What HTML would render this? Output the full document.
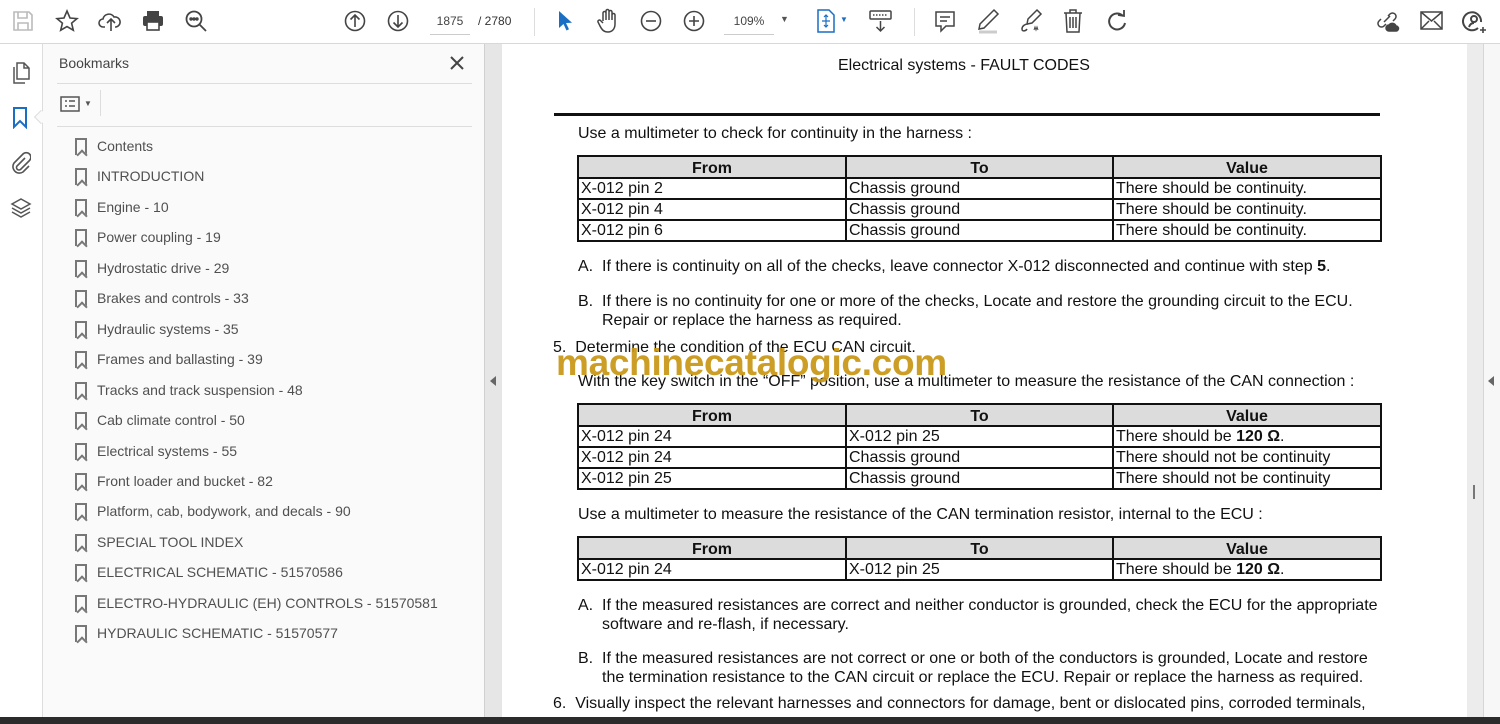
<!DOCTYPE html>
<html><head><meta charset="utf-8"><style>
*{margin:0;padding:0;box-sizing:border-box}
body{width:1500px;height:724px;overflow:hidden;background:#fff;font-family:"Liberation Sans",Arial,sans-serif;position:relative}
.a{position:absolute}
#tb{left:0;top:0;width:1500px;height:44px;background:#fff;border-bottom:1px solid #d8d8d8}
#rail{left:0;top:44px;width:43px;height:674px;background:#fff;border-right:1px solid #ddd}
#bm{left:43px;top:44px;width:441px;height:674px;background:#fafafa}
#split{left:484px;top:44px;width:18px;height:674px;background:#e6e6e6;border-left:1px solid #d0d0d0}
#page{left:502px;top:44px;width:965px;height:674px;background:#fff}
#rg{left:1467px;top:44px;width:16px;height:674px;background:#ececec}
#rr{left:1483px;top:44px;width:17px;height:674px;background:#f7f7f7;border-left:1px solid #d6d6d6}
#bot{left:0;top:717px;width:1500px;height:7px;background:#2b2b2b}
.bk{position:absolute;left:97px;font-size:14px;color:#505050;font-family:"Liberation Sans",sans-serif}
.bi{position:absolute;left:75px;width:12px;height:17px;border:2px solid #777;border-bottom:none}
.bi:after{content:"";position:absolute;left:1px;bottom:-4px;width:6px;height:6px;border-left:2px solid #777;border-top:2px solid #777;transform:rotate(45deg);background:#fafafa}
.t{position:absolute;font-size:16px;color:#111;white-space:nowrap}
table{position:absolute;left:577px;width:803px;border-collapse:collapse;font-size:16px;color:#111;table-layout:fixed}
td,th{border:2px solid #111;height:21px;padding:0 2px;line-height:17px;text-align:left;font-weight:normal;white-space:nowrap;overflow:hidden}
th{background:#dcdcdc;text-align:center;font-weight:bold;height:20px;line-height:17px;padding-top:3px}
svg{position:absolute}
</style></head><body>
<div id="tb" class="a"></div>
<svg style="left:12px;top:10px" width="22" height="22" fill="none" stroke="#bbb" stroke-width="1.6"><path d="M2 2h15l3 3v15H2z M6 2v6h9V2 M6 20v-7h10v7"/></svg>
<svg style="left:55px;top:9px" width="24" height="24" fill="none" stroke="#444" stroke-width="1.6"><path d="M12 2l3 7 7 .6-5.4 4.6 1.7 7L12 17.5 5.7 21.2l1.7-7L2 9.6 9 9z"/></svg>
<svg style="left:98px;top:9px" width="26" height="24" fill="none" stroke="#444" stroke-width="1.6"><path d="M7 18H5a4 4 0 010-8 6 6 0 0111-2 4.5 4.5 0 012 10h-1 M13 22V11 M9 14l4-4 4 4"/></svg>
<svg style="left:141px;top:9px" width="24" height="24"><rect x="6" y="2" width="12" height="5" fill="#444"/><rect x="2" y="7" width="20" height="10" rx="2" fill="#444"/><rect x="6" y="13" width="12" height="8" fill="#fff" stroke="#444" stroke-width="1.6"/></svg>
<svg style="left:184px;top:9px" width="24" height="24" fill="none" stroke="#444" stroke-width="1.8"><circle cx="10" cy="10" r="7.5"/><path d="M15.5 15.5L22 22"/><circle cx="7" cy="10" r=".8" fill="#444"/><circle cx="10" cy="10" r=".8" fill="#444"/><circle cx="13" cy="10" r=".8" fill="#444"/></svg>
<svg style="left:344px;top:10px" width="22" height="22" fill="none" stroke="#444" stroke-width="1.6"><circle cx="11" cy="11" r="9.5"/><path d="M11 17V5 M6.5 9.5L11 5l4.5 4.5"/></svg>
<svg style="left:387px;top:10px" width="22" height="22" fill="none" stroke="#444" stroke-width="1.6"><circle cx="11" cy="11" r="9.5"/><path d="M11 5v12 M6.5 12.5L11 17l4.5-4.5"/></svg>
<div class="a" style="left:430px;top:14px;width:40px;font-size:12px;color:#444;text-align:center;border-bottom:1px solid #ccc;padding-bottom:6px">1875</div>
<div class="a" style="left:478px;top:14px;font-size:12px;color:#333">/ 2780</div>
<div class="a" style="left:534px;top:8px;width:1px;height:28px;background:#ddd"></div>
<svg style="left:557px;top:10px" width="16" height="22"><path d="M2 1v17l4.5-4 3 6.5 2.5-1.2-3-6.3 6-.3z" fill="#1a6fc4"/></svg>
<svg style="left:596px;top:8px" width="24" height="26" fill="none" stroke="#444" stroke-width="1.5"><path d="M7 13V5a1.5 1.5 0 013 0v7V3a1.5 1.5 0 013 0v9V4a1.5 1.5 0 013 0v8V7a1.5 1.5 0 013 0v9c0 5-3 8-7 8s-6-2-8-6l-2-4a1.5 1.5 0 012.5-1.5L7 15"/></svg>
<svg style="left:640px;top:10px" width="22" height="22" fill="none" stroke="#444" stroke-width="1.6"><circle cx="11" cy="11" r="9.5"/><path d="M6 11h10"/></svg>
<svg style="left:683px;top:10px" width="22" height="22" fill="none" stroke="#444" stroke-width="1.6"><circle cx="11" cy="11" r="9.5"/><path d="M6 11h10 M11 6v10"/></svg>
<div class="a" style="left:724px;top:14px;width:50px;font-size:12px;color:#444;text-align:center;border-bottom:1px solid #ccc;padding-bottom:6px">109%</div>
<div class="a" style="left:780px;top:14px;font-size:9px;color:#555">▼</div>
<svg style="left:816px;top:9px" width="20" height="24" fill="none" stroke="#1a6fc4" stroke-width="1.5"><path d="M2 1h11l5 5v17H2z"/><path d="M10 6v12 M6 12h8 M8 8l2-2 2 2 M8 16l2 2 2-2" stroke-width="1.2"/></svg>
<div class="a" style="left:840px;top:15px;font-size:8px;color:#1a6fc4">▼</div>
<svg style="left:869px;top:9px" width="24" height="24" fill="none" stroke="#444" stroke-width="1.5"><rect x="1" y="2" width="21" height="8" rx="1"/><path d="M4 6h15" stroke-dasharray="1.5 1.5"/><path d="M11.5 12v10 M7.5 18l4 4 4-4"/></svg>
<div class="a" style="left:914px;top:8px;width:1px;height:28px;background:#ddd"></div>
<svg style="left:934px;top:10px" width="22" height="24" fill="none" stroke="#444" stroke-width="1.5"><path d="M2 2h18v14h-8l-5 5v-5H2z M6 7h10 M6 11h7"/></svg>
<svg style="left:976px;top:8px" width="24" height="26" fill="none" stroke="#444" stroke-width="1.5"><path d="M18 2l4 4L8 20l-5 1 1-5z"/><path d="M3 24h18" stroke="#ccc" stroke-width="3"/></svg>
<svg style="left:1018px;top:8px" width="26" height="26" fill="none" stroke="#444" stroke-width="1.5"><path d="M19 2l4 4-9 9-5 1 1-5z M10 16c-3 0-6 2-6 5s4 2 5 0"/><path d="M16 22l1-3 1 3 1-3 1 3" stroke-width="1"/></svg>
<svg style="left:1062px;top:8px" width="22" height="26" fill="none" stroke="#444" stroke-width="1.5"><path d="M2 5h18 M8 5V2h6v3 M4 5l1 19h12l1-19 M8 9v11 M11 9v11 M14 9v11"/></svg>
<svg style="left:1105px;top:9px" width="24" height="24" fill="none" stroke="#444" stroke-width="2"><path d="M18 7a8 8 0 10 2 7"/><path d="M13 6l6 1 0-6" stroke-width="1.8"/></svg>
<svg style="left:1375px;top:9px" width="26" height="24" fill="none" stroke="#444" stroke-width="1.5"><path d="M9 13l6-6 M6 10l-2 2a3.5 3.5 0 005 5l2-2 M18 12l2-2a3.5 3.5 0 00-5-5l-2 2"/><path d="M14 22a3 3 0 010-6 4 4 0 017 1 2.5 2.5 0 010 5z" fill="#444"/></svg>
<svg style="left:1420px;top:10px" width="24" height="22" fill="none" stroke="#444" stroke-width="1.5"><rect x="1" y="2" width="21" height="17"/><path d="M1 2l10.5 9L22 2 M1 19l8-8 M22 19l-8-8"/></svg>
<svg style="left:1462px;top:8px" width="26" height="28" fill="none" stroke="#444" stroke-width="2"><path d="M16 20a9 9 0 11 3-6 M12 8a3 3 0 100 6 3 3 0 000-6 M7 19c1-3 3-4 5-4"/><path d="M21 19v6 M18 22h6" stroke-width="1.6"/></svg>

<div id="rail" class="a"></div>
<svg style="left:10px;top:60px" width="22" height="26" fill="none" stroke="#555" stroke-width="1.5"><path d="M7 3h7l5 5v11H7z M14 3v5h5 M4 7v16h11"/></svg>
<svg style="left:12px;top:107px" width="16" height="22" fill="none" stroke="#1a6fc4" stroke-width="2"><path d="M2 1h12v19l-6-6-6 6z"/></svg>
<div class="a" style="left:36px;top:112px;width:10px;height:10px;background:#fafafa;border-left:1px solid #ddd;border-bottom:1px solid #ddd;transform:rotate(45deg)"></div>
<svg style="left:9px;top:150px" width="22" height="24" fill="none" stroke="#555" stroke-width="1.6"><path d="M16 8l-8 8a2.5 2.5 0 003.5 3.5l9-9a4.5 4.5 0 00-6.5-6.5l-9 9a6.5 6.5 0 009 9l6-6"/></svg>
<svg style="left:9px;top:196px" width="24" height="24" fill="none" stroke="#555" stroke-width="1.5"><path d="M12 3l9 5-9 5-9-5z M3 12l9 5 9-5 M3 16l9 5 9-5"/></svg>

<div id="bm" class="a"></div>
<div class="a" style="left:59px;top:55px;font-size:14px;color:#444">Bookmarks</div>
<svg style="left:450px;top:56px" width="14" height="14" stroke="#444" stroke-width="2"><path d="M1 1l12 12M13 1L1 13"/></svg>
<div class="a" style="left:57px;top:83px;width:415px;height:1px;background:#ddd"></div>
<svg style="left:60px;top:96px" width="20" height="16" fill="none" stroke="#555" stroke-width="1.5"><rect x="1" y="1" width="18" height="14"/><path d="M5 5h2 M9 5h6 M5 10h2 M9 10h6"/></svg>
<div class="a" style="left:84px;top:99px;font-size:8px;color:#555">▼</div>
<div class="a" style="left:100px;top:90px;width:1px;height:26px;background:#ddd"></div>
<div class="a" style="left:57px;top:126px;width:415px;height:1px;background:#ddd"></div>

<div class="bi" style="top:138px"></div><div class="bk" style="top:138px">Contents</div>
<div class="bi" style="top:168px"></div><div class="bk" style="top:168px">INTRODUCTION</div>
<div class="bi" style="top:199px"></div><div class="bk" style="top:199px">Engine - 10</div>
<div class="bi" style="top:229px"></div><div class="bk" style="top:229px">Power coupling - 19</div>
<div class="bi" style="top:260px"></div><div class="bk" style="top:260px">Hydrostatic drive - 29</div>
<div class="bi" style="top:290px"></div><div class="bk" style="top:290px">Brakes and controls - 33</div>
<div class="bi" style="top:321px"></div><div class="bk" style="top:321px">Hydraulic systems - 35</div>
<div class="bi" style="top:351px"></div><div class="bk" style="top:351px">Frames and ballasting - 39</div>
<div class="bi" style="top:382px"></div><div class="bk" style="top:382px">Tracks and track suspension - 48</div>
<div class="bi" style="top:412px"></div><div class="bk" style="top:412px">Cab climate control - 50</div>
<div class="bi" style="top:443px"></div><div class="bk" style="top:443px">Electrical systems - 55</div>
<div class="bi" style="top:473px"></div><div class="bk" style="top:473px">Front loader and bucket - 82</div>
<div class="bi" style="top:503px"></div><div class="bk" style="top:503px">Platform, cab, bodywork, and decals - 90</div>
<div class="bi" style="top:534px"></div><div class="bk" style="top:534px">SPECIAL TOOL INDEX</div>
<div class="bi" style="top:564px"></div><div class="bk" style="top:564px">ELECTRICAL SCHEMATIC - 51570586</div>
<div class="bi" style="top:595px"></div><div class="bk" style="top:595px">ELECTRO-HYDRAULIC (EH) CONTROLS - 51570581</div>
<div class="bi" style="top:625px"></div><div class="bk" style="top:625px">HYDRAULIC SCHEMATIC - 51570577</div>

<div id="split" class="a"></div>
<div class="a" style="left:490px;top:376px;width:0;height:0;border-top:5px solid transparent;border-bottom:5px solid transparent;border-right:6px solid #666"></div>
<div id="page" class="a"></div>
<div id="rg" class="a"></div>
<div id="rr" class="a"></div>
<div class="a" style="left:1488px;top:376px;width:0;height:0;border-top:5px solid transparent;border-bottom:5px solid transparent;border-right:6px solid #666"></div>
<div class="a" style="left:1473px;top:485px;width:2px;height:14px;background:#777"></div>

<div class="t" style="left:838px;top:57px;font-size:16px">Electrical systems - FAULT CODES</div>
<div class="a" style="left:554px;top:113px;width:826px;height:3px;background:#111"></div>
<div class="t" style="left:578px;top:125px">Use a multimeter to check for continuity in the harness :</div>
<table style="top:155px"><colgroup><col style="width:268px"><col style="width:267px"><col style="width:268px"></colgroup>
<tr><th style="height:21px">From</th><th>To</th><th>Value</th></tr>
<tr><td style="height:21px">X-012 pin 2</td><td>Chassis ground</td><td>There should be continuity.</td></tr>
<tr><td style="height:21px">X-012 pin 4</td><td>Chassis ground</td><td>There should be continuity.</td></tr>
<tr><td style="height:20px">X-012 pin 6</td><td>Chassis ground</td><td>There should be continuity.</td></tr></table>
<div class="t" style="left:578px;top:258px">A.&nbsp; If there is continuity on all of the checks, leave connector X-012 disconnected and continue with step <b>5</b>.</div>
<div class="t" style="left:578px;top:293px">B.&nbsp; If there is no continuity for one or more of the checks, Locate and restore the grounding circuit to the ECU.</div>
<div class="t" style="left:602px;top:312px">Repair or replace the harness as required.</div>
<div class="t" style="left:553px;top:339px">5.&nbsp; Determine the condition of the ECU CAN circuit.</div>
<div class="t" style="left:578px;top:373px">With the key switch in the “OFF” position, use a multimeter to measure the resistance of the CAN connection :</div>
<div class="t" style="left:556px;top:342px;font-size:37px;font-weight:bold;color:rgba(200,150,20,.92);letter-spacing:-0.3px">machinecatalogic.com</div>
<table style="top:403px"><colgroup><col style="width:268px"><col style="width:267px"><col style="width:268px"></colgroup>
<tr><th style="height:21px">From</th><th>To</th><th>Value</th></tr>
<tr><td style="height:21px">X-012 pin 24</td><td>X-012 pin 25</td><td>There should be <b>120 Ω</b>.</td></tr>
<tr><td style="height:21px">X-012 pin 24</td><td>Chassis ground</td><td>There should not be continuity</td></tr>
<tr><td style="height:20px">X-012 pin 25</td><td>Chassis ground</td><td>There should not be continuity</td></tr></table>
<div class="t" style="left:578px;top:506px">Use a multimeter to measure the resistance of the CAN termination resistor, internal to the ECU :</div>
<table style="top:536px"><colgroup><col style="width:268px"><col style="width:267px"><col style="width:268px"></colgroup>
<tr><th style="height:21px">From</th><th>To</th><th>Value</th></tr>
<tr><td style="height:20px">X-012 pin 24</td><td>X-012 pin 25</td><td>There should be <b>120 Ω</b>.</td></tr></table>
<div class="t" style="left:578px;top:597px">A.&nbsp; If the measured resistances are correct and neither conductor is grounded, check the ECU for the appropriate</div>
<div class="t" style="left:602px;top:616px">software and re-flash, if necessary.</div>
<div class="t" style="left:578px;top:650px">B.&nbsp; If the measured resistances are not correct or one or both of the conductors is grounded, Locate and restore</div>
<div class="t" style="left:602px;top:669px">the termination resistance to the CAN circuit or replace the ECU. Repair or replace the harness as required.</div>
<div class="t" style="left:553px;top:695px">6.&nbsp; Visually inspect the relevant harnesses and connectors for damage, bent or dislocated pins, corroded terminals,</div>
<div id="bot" class="a"></div>
</body></html>
